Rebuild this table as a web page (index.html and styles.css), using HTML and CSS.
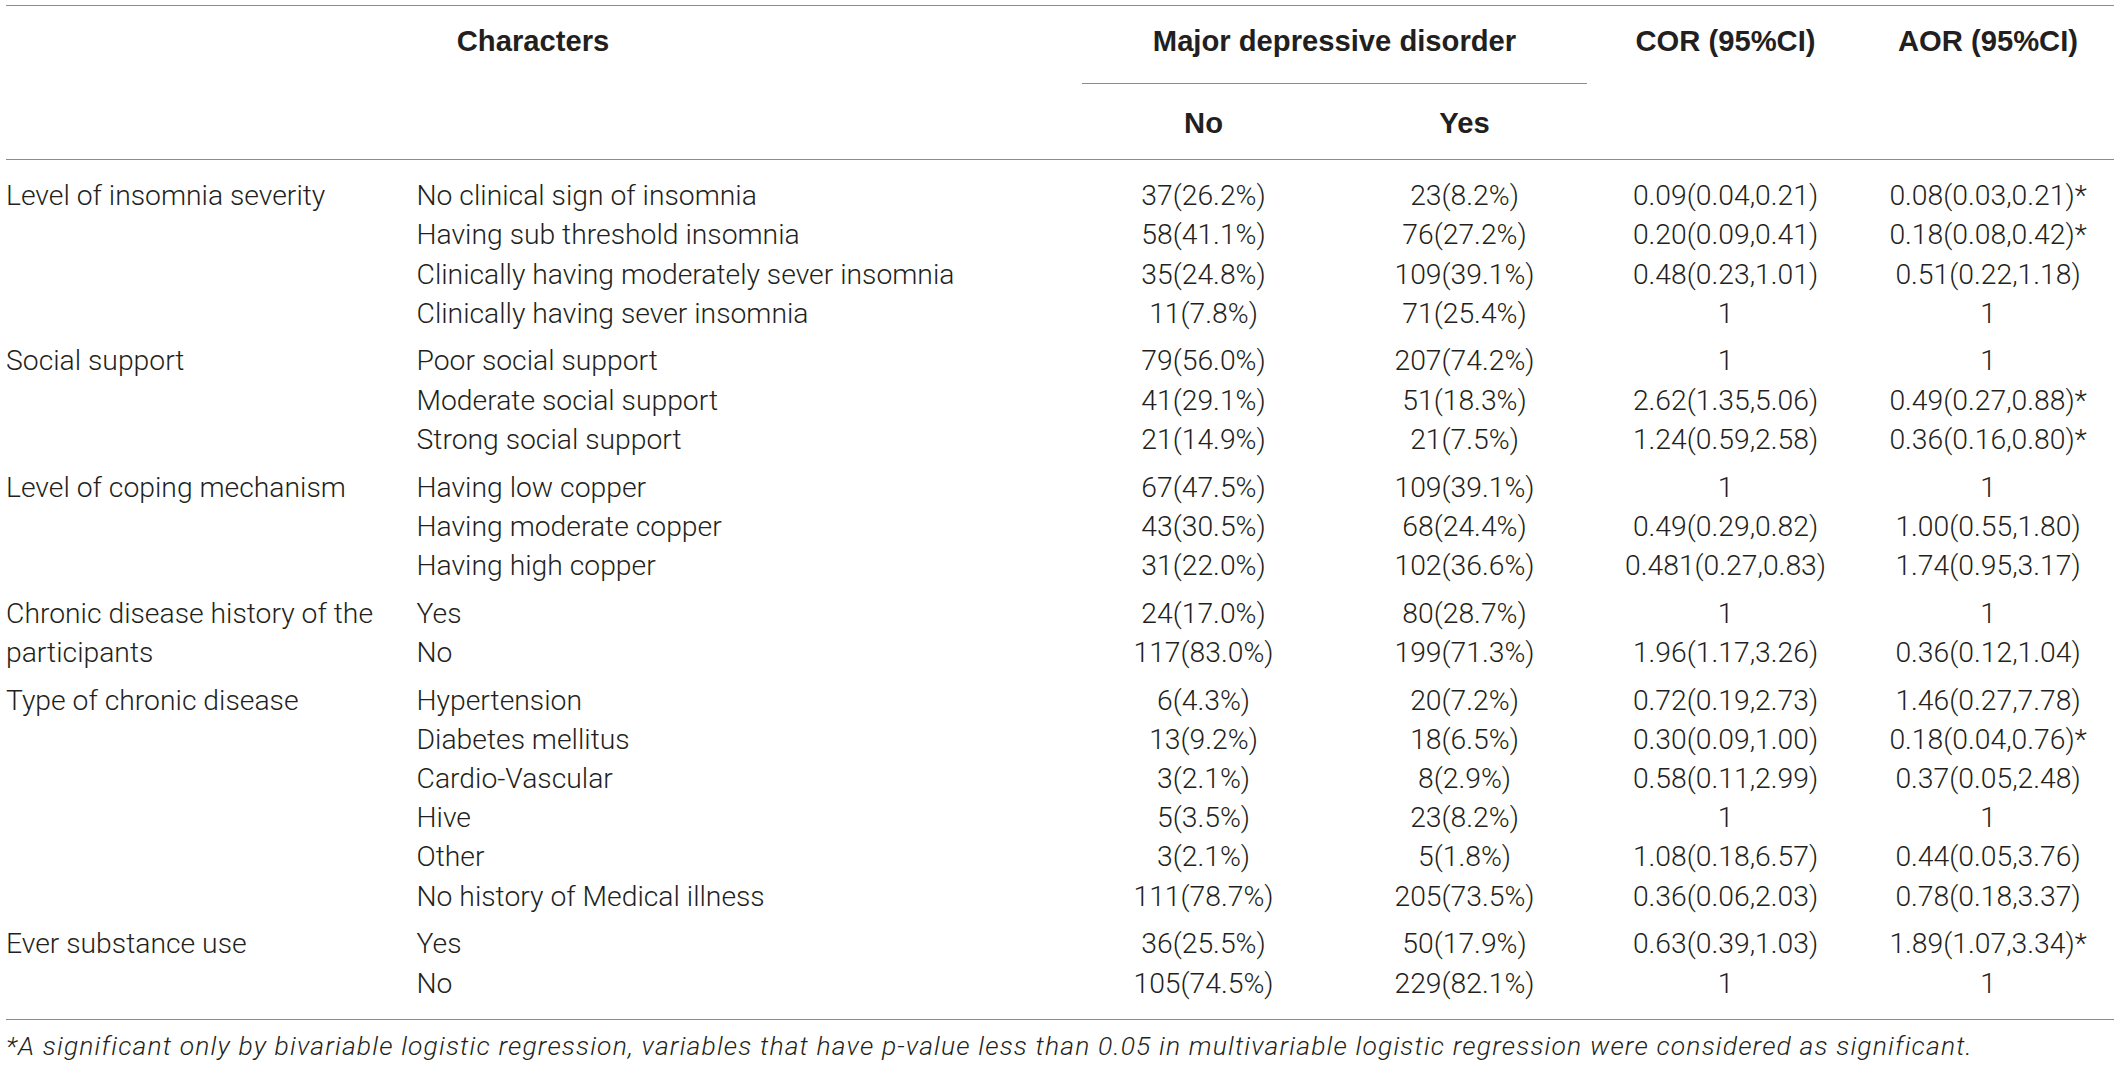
FILE: index.html
```html
<!DOCTYPE html>
<html lang="en">
<head>
<meta charset="utf-8">
<title>Factors associated with major depressive disorder</title>
<link rel="stylesheet" href="styles.css">
</head>
<body>
<div class="wrap">
<table class="tbl">
  <colgroup>
    <col class="c-var">
    <col class="c-cat">
    <col class="c-num">
    <col class="c-num">
    <col class="c-num">
    <col class="c-last">
  </colgroup>
  <thead>
    <tr class="h1">
      <th colspan="2" rowspan="2" class="th-chars">Characters</th>
      <th colspan="2" class="th-group"><div class="group-line">Major depressive disorder</div></th>
      <th rowspan="2" class="th-or">COR (95%CI)</th>
      <th rowspan="2" class="th-or th-aor">AOR (95%CI)</th>
    </tr>
    <tr class="h2">
      <th class="th-sub">No</th>
      <th class="th-sub">Yes</th>
    </tr>
  </thead>
  <tbody>
    <tr class="g0">
      <td rowspan="4" class="var">Level of insomnia severity</td>
      <td class="cat">No clinical sign of insomnia</td><td>37(26.2%)</td><td>23(8.2%)</td><td>0.09(0.04,0.21)</td><td class="aor">0.08(0.03,0.21)*</td>
    </tr>
    <tr><td class="cat">Having sub threshold insomnia</td><td>58(41.1%)</td><td>76(27.2%)</td><td>0.20(0.09,0.41)</td><td class="aor">0.18(0.08,0.42)*</td></tr>
    <tr><td class="cat">Clinically having moderately sever insomnia</td><td>35(24.8%)</td><td>109(39.1%)</td><td>0.48(0.23,1.01)</td><td class="aor">0.51(0.22,1.18)</td></tr>
    <tr><td class="cat">Clinically having sever insomnia</td><td>11(7.8%)</td><td>71(25.4%)</td><td>1</td><td class="aor">1</td></tr>

    <tr class="g">
      <td rowspan="3" class="var">Social support</td>
      <td class="cat">Poor social support</td><td>79(56.0%)</td><td>207(74.2%)</td><td>1</td><td class="aor">1</td>
    </tr>
    <tr><td class="cat">Moderate social support</td><td>41(29.1%)</td><td>51(18.3%)</td><td>2.62(1.35,5.06)</td><td class="aor">0.49(0.27,0.88)*</td></tr>
    <tr><td class="cat">Strong social support</td><td>21(14.9%)</td><td>21(7.5%)</td><td>1.24(0.59,2.58)</td><td class="aor">0.36(0.16,0.80)*</td></tr>

    <tr class="g">
      <td rowspan="3" class="var">Level of coping mechanism</td>
      <td class="cat">Having low copper</td><td>67(47.5%)</td><td>109(39.1%)</td><td>1</td><td class="aor">1</td>
    </tr>
    <tr><td class="cat">Having moderate copper</td><td>43(30.5%)</td><td>68(24.4%)</td><td>0.49(0.29,0.82)</td><td class="aor">1.00(0.55,1.80)</td></tr>
    <tr><td class="cat">Having high copper</td><td>31(22.0%)</td><td>102(36.6%)</td><td>0.481(0.27,0.83)</td><td class="aor">1.74(0.95,3.17)</td></tr>

    <tr class="g">
      <td rowspan="2" class="var">Chronic disease history of the participants</td>
      <td class="cat">Yes</td><td>24(17.0%)</td><td>80(28.7%)</td><td>1</td><td class="aor">1</td>
    </tr>
    <tr><td class="cat">No</td><td>117(83.0%)</td><td>199(71.3%)</td><td>1.96(1.17,3.26)</td><td class="aor">0.36(0.12,1.04)</td></tr>

    <tr class="g">
      <td rowspan="6" class="var">Type of chronic disease</td>
      <td class="cat">Hypertension</td><td>6(4.3%)</td><td>20(7.2%)</td><td>0.72(0.19,2.73)</td><td class="aor">1.46(0.27,7.78)</td>
    </tr>
    <tr><td class="cat">Diabetes mellitus</td><td>13(9.2%)</td><td>18(6.5%)</td><td>0.30(0.09,1.00)</td><td class="aor">0.18(0.04,0.76)*</td></tr>
    <tr><td class="cat">Cardio-Vascular</td><td>3(2.1%)</td><td>8(2.9%)</td><td>0.58(0.11,2.99)</td><td class="aor">0.37(0.05,2.48)</td></tr>
    <tr><td class="cat">Hive</td><td>5(3.5%)</td><td>23(8.2%)</td><td>1</td><td class="aor">1</td></tr>
    <tr><td class="cat">Other</td><td>3(2.1%)</td><td>5(1.8%)</td><td>1.08(0.18,6.57)</td><td class="aor">0.44(0.05,3.76)</td></tr>
    <tr><td class="cat">No history of Medical illness</td><td>111(78.7%)</td><td>205(73.5%)</td><td>0.36(0.06,2.03)</td><td class="aor">0.78(0.18,3.37)</td></tr>

    <tr class="g">
      <td rowspan="2" class="var var-last">Ever substance use</td>
      <td class="cat">Yes</td><td>36(25.5%)</td><td>50(17.9%)</td><td>0.63(0.39,1.03)</td><td class="aor">1.89(1.07,3.34)*</td>
    </tr>
    <tr class="last"><td class="cat">No</td><td>105(74.5%)</td><td>229(82.1%)</td><td>1</td><td class="aor">1</td></tr>
  </tbody>
</table>
<p class="note">*A significant only by bivariable logistic regression, variables that have p-value less than 0.05 in multivariable logistic regression were considered as significant.</p>
</div>
</body>
</html>
```

FILE: styles.css
```css
html, body {
  margin: 0;
  padding: 0;
  background: #ffffff;
}

body {
  font-family: Roboto, "Liberation Sans", Arial, sans-serif;
  font-weight: 300;
  color: #231f20;
}

.wrap {
  width: 2108px;
  margin: 5px 0 0 6px;
}

.tbl {
  width: 2108px;
  table-layout: fixed;
  border-collapse: separate;
  border-spacing: 0;
  font-size: 28.3px;
}

.c-var { width: 410.5px; }
.c-cat { width: 656.5px; }
.c-num { width: 261px; }
.c-last { width: 258px; }

th {
  font-family: "Liberation Sans", Arial, sans-serif;
  font-size: 29.2px;
  font-weight: 700;
  line-height: 34px;
  text-align: center;
  vertical-align: top;
  padding: 0;
  color: #231f20;
}

.h1 th {
  border-top: 1px solid #8c8c8c;
  padding-top: 17.5px;
}

.th-chars,
.th-or,
.h2 th {
  border-bottom: 1px solid #8c8c8c;
}

.th-chars {
  padding-right: 13px;
}

.th-aor {
  padding-left: 6px;
}

.th-group {
  padding-left: 9px;
  padding-right: 8px;
}

.group-line {
  padding-bottom: 25.2px;
  border-bottom: 1px solid #8c8c8c;
}

.h2 th {
  padding-top: 22.6px;
  padding-bottom: 18.4px;
}

td {
  padding: 0;
  line-height: 39.2px;
  text-align: center;
  vertical-align: top;
  white-space: nowrap;
}

td.var {
  text-align: left;
  white-space: normal;
  padding-right: 30px;
}

td.cat {
  text-align: left;
}

td.aor {
  padding-left: 6px;
}

.g0 td {
  padding-top: 16.5px;
}

.g td {
  padding-top: 8.5px;
}

.last td,
td.var-last {
  padding-bottom: 16px;
}

.note {
  margin: 0;
  border-top: 1px solid #8c8c8c;
  padding-top: 10.5px;
  font-size: 26.5px;
  letter-spacing: 1.15px;
  line-height: 32px;
  font-style: italic;
  font-weight: 300;
  white-space: nowrap;
}
```
